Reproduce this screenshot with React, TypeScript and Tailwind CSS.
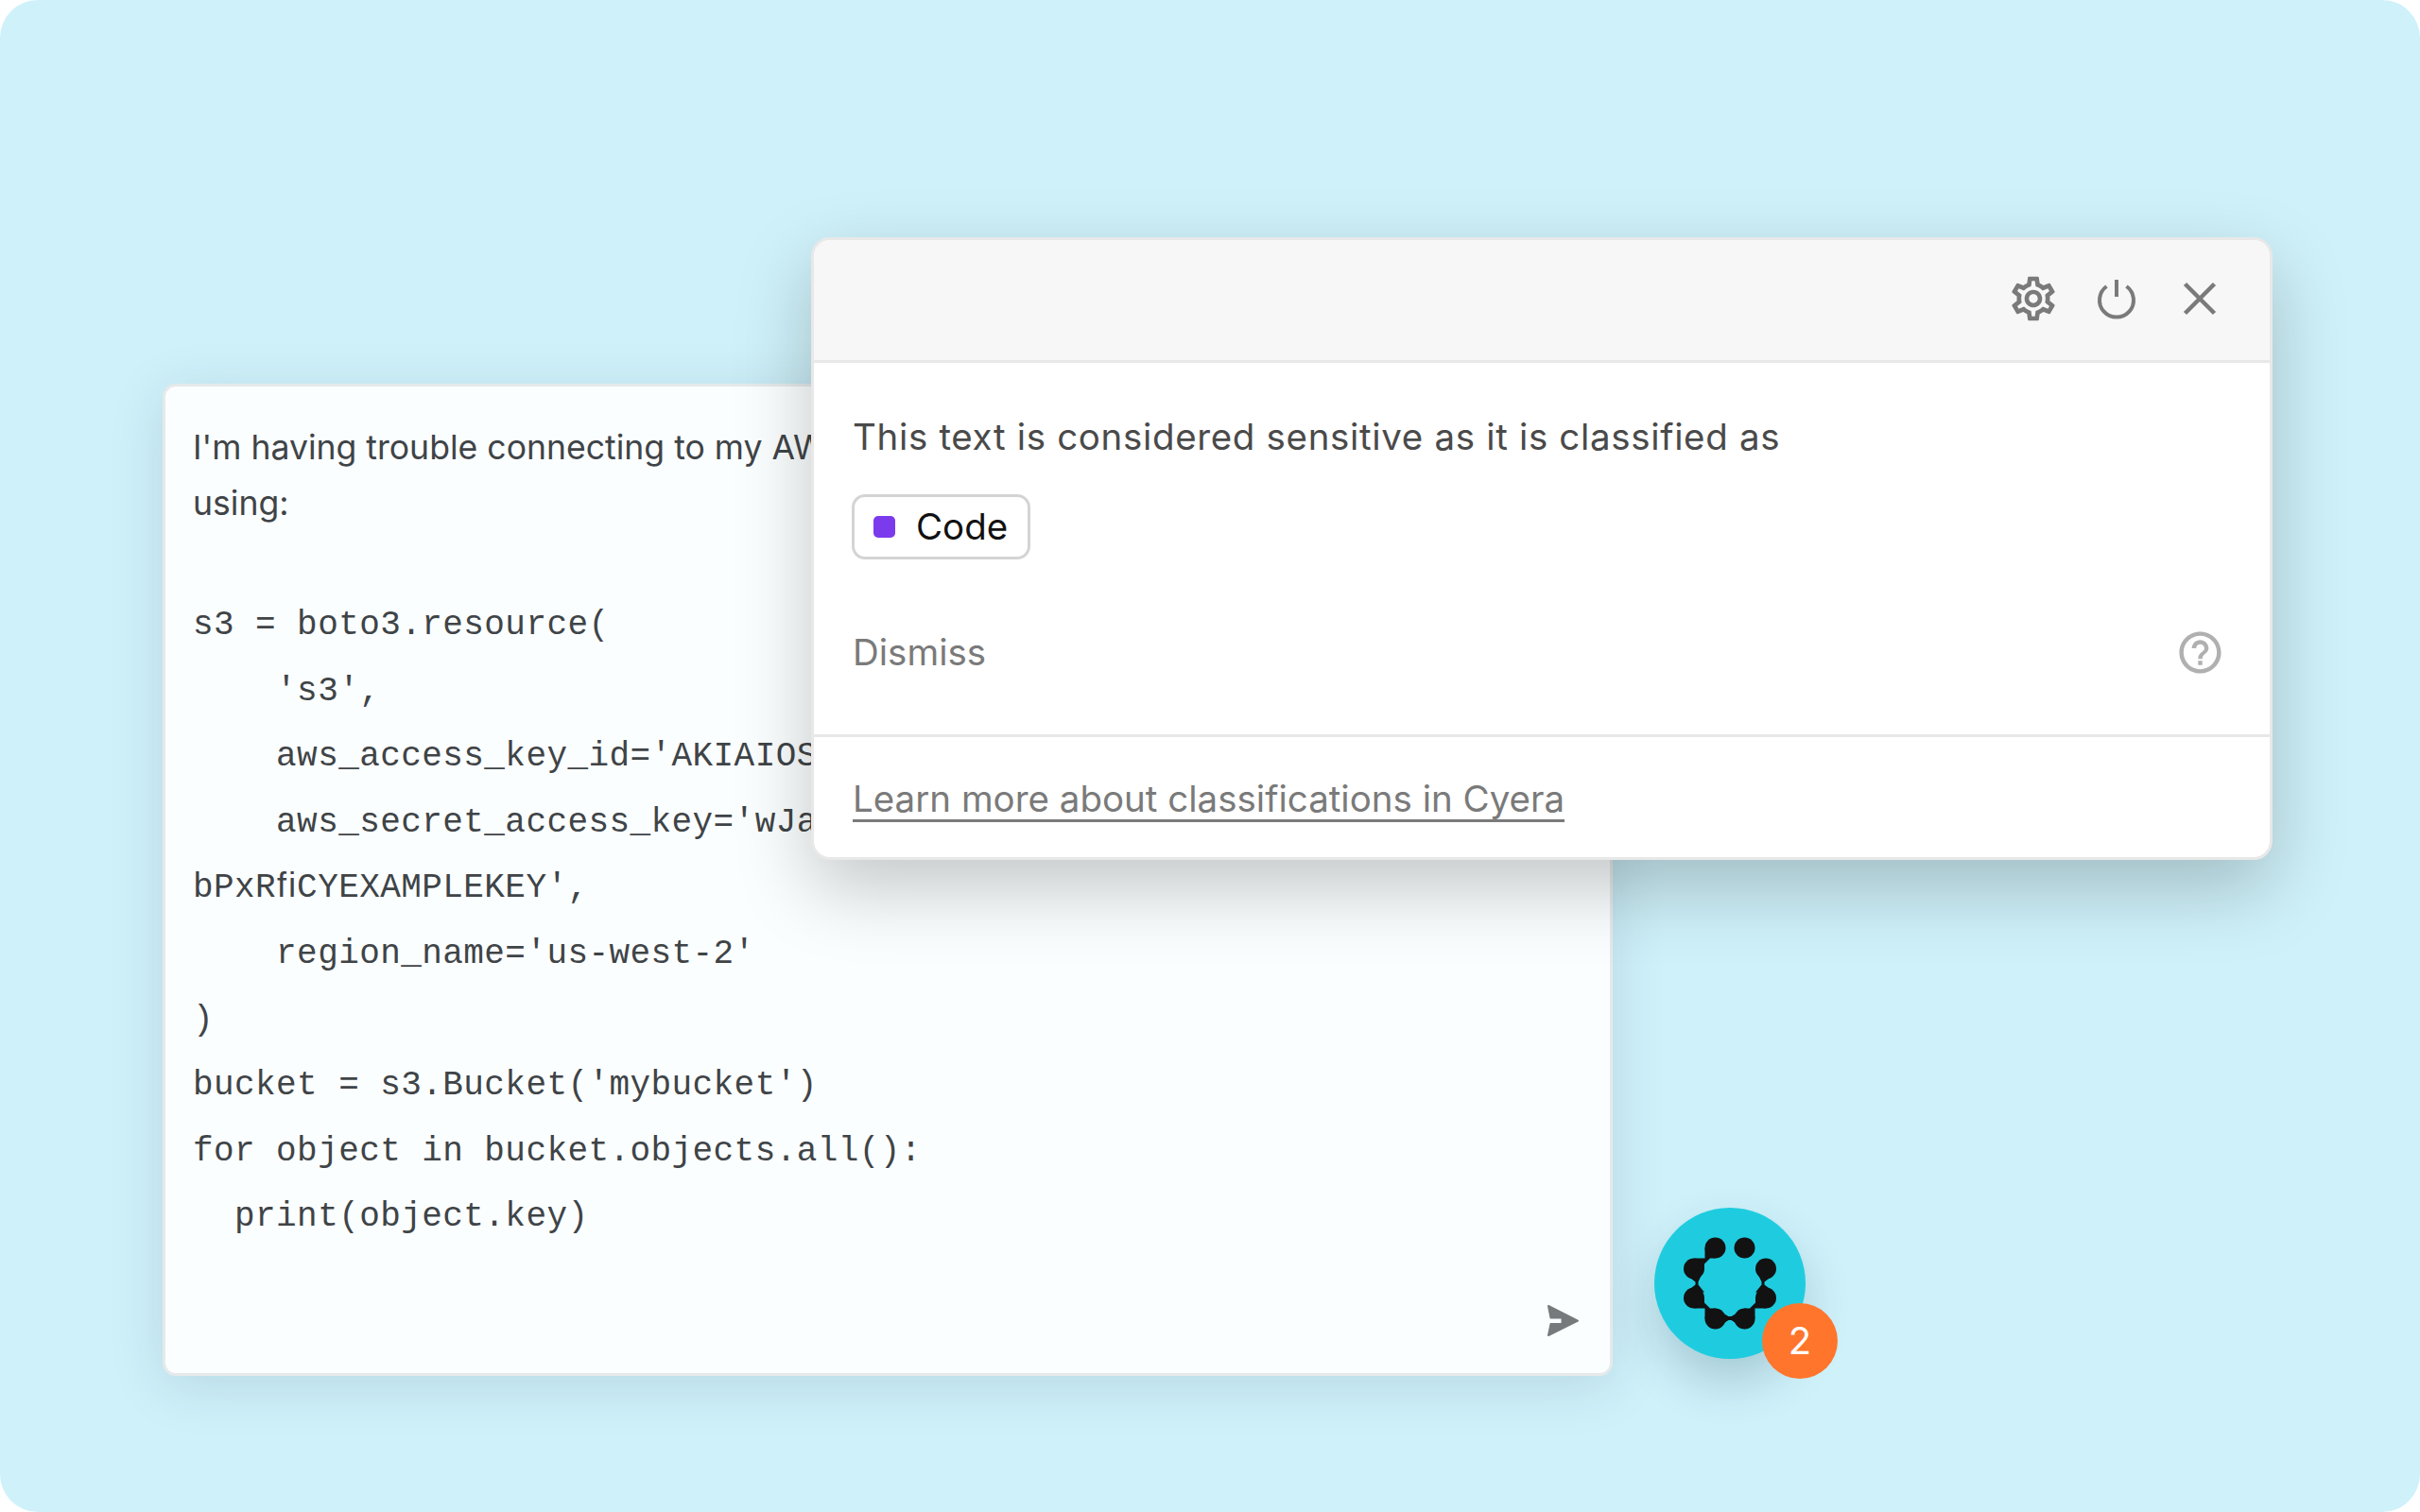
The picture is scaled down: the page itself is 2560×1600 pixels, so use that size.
import { MdOutlineSettings, MdOutlineHelpOutline } from "react-icons/md";

const codeLines = [
  "s3 = boto3.resource(",
  "    's3',",
  "    aws_access_key_id='AKIAIOSFODNN7EXAMPLE',",
  "    aws_secret_access_key='wJalrXUtnFEMI/K7MDENG/",
  "bPxR\uFB01CYEXAMPLEKEY',",
  "    region_name='us-west-2'",
  ")",
  "bucket = s3.Bucket('mybucket')",
  "for object in bucket.objects.all():",
  "  print(object.key)",
];

function Logo() {
  return (
    <svg width="120" height="120" viewBox="0 2.5 120 120" fill="#121212">
      {[
        [44.5, 25],
        [75.5, 25],
        [98, 47],
        [98, 78],
        [75.5, 100],
        [44.5, 100],
        [22, 78],
        [22, 47],
      ].map(([x, y]) => (
        <circle key={`${x}-${y}`} cx={x} cy={y} r="11" />
      ))}
      <path d="M22 36H33.5V25H44.5V36H39L33 42V47H22Z" />
      <path d="M22 89H33.5V100H44.5V89H39L33 83V78H22Z" />
      <path d="M98 89H86.5V100H75.5V89H81L87 83V78H98Z" />
      <path d="M13 53L23.5 61V64L13 72H33L26.5 64V61L33 47Z" />
      <path d="M107 53L96.5 61V64L107 72H87L93.5 64V61L87 47Z" />
      <path d="M44 89L58.5 97.5H61.5L76 89V111L61.5 101.5H58.5L44 111Z" />
    </svg>
  );
}

export default function App() {
  return (
    <div className="w-[2560px] h-[1600px] bg-white font-['Inter',sans-serif]">
      <div className="relative w-full h-full rounded-[40px] bg-[#cff1fa] pl-[172px] pt-[406px] flex items-start overflow-hidden">
        <div className="w-[1534px] h-[1050px] flex flex-col bg-[#fbfeff] border-[3px] border-[#e6e9ea] rounded-[14px] pl-[29px] pr-[29px] pt-[35px] pb-[35px] shadow-[0_10px_60px_rgba(0,40,60,0.12)]">
          <p className="text-[35.6px] leading-[59px] text-[#3f4447] whitespace-pre">
            {"I'm having trouble connecting to my AWS S3 bucket with the code I am\nusing:"}
          </p>
          <div className="mt-[65px] font-['Liberation_Mono',monospace] text-[36px] tracking-[0.42px] leading-[69.6px] text-[#3f4447] whitespace-pre">
            {codeLines.map((line) => (
              <div key={line}>{line}</div>
            ))}
          </div>
          <svg className="mt-auto self-end" width="40" height="40" viewBox="34 38 40 40" fill="#767a7d" stroke="#767a7d" strokeWidth="2" strokeLinejoin="round">
            <path d="M38 42L69 57.7L38 73L40.5 61H52.5V54.5H40.5Z" />
          </svg>
        </div>

        <div className="relative ml-[44px] mt-[872px] w-[160px] h-[160px] rounded-full bg-[#1fccdf] flex items-center justify-center shadow-[0_24px_50px_rgba(0,50,70,0.2)]">
          <Logo />
          <div className="absolute left-[114px] top-[101px] w-[80px] h-[80px] rounded-full bg-[#ff752c] flex items-center justify-center text-white text-[40px] leading-none">
            2
          </div>
        </div>

        <div className="absolute left-[858px] top-[251px] w-[1546px] h-[659px] flex flex-col bg-white border-[3px] border-[#e8e8e8] rounded-[20px] overflow-hidden shadow-[0_30px_80px_rgba(0,0,0,0.22)]">
          <div className="h-[130px] shrink-0 flex items-center justify-end gap-[40px] pr-[50px] pb-[3px] bg-[#f7f7f7] border-b-[3px] border-[#e8e8e8]">
            <div className="w-[48px] h-[48px] flex items-center justify-center text-[#7a7a7a]">
              <MdOutlineSettings size={56} className="shrink-0" />
            </div>
            <div className="w-[48px] h-[48px] flex items-center justify-center">
              <svg width="48" height="48" viewBox="0 0 48 48" fill="none" stroke="#7a7a7a" strokeWidth="4">
                <path d="M24 4V22" />
                <path d="M13.5 11A18 18 0 1 0 34.5 11" />
              </svg>
            </div>
            <div className="w-[48px] h-[48px] flex items-center justify-center">
              <svg width="48" height="48" viewBox="0 0 48 48" fill="none" stroke="#7a7a7a" strokeWidth="4.5">
                <path d="M8.5 8.5L39.5 39.5M39.5 8.5L8.5 39.5" />
              </svg>
            </div>
          </div>
          <div className="pl-[41px] pr-[41px] pt-[50px] pb-[59px] border-b-[3px] border-[#e8e8e8]">
            <p className="text-[38.5px] tracking-[0.66px] leading-[56px] text-[#4a4a4a]">
              This text is considered sensitive as it is classified as
            </p>
            <div className="mt-[33px] w-[189px] h-[69px] -ml-[1px] flex items-center gap-[22px] pl-[20px] border-[3px] border-[#d4d4d4] rounded-[14px]">
              <span className="w-[23px] h-[23px] rounded-[5px] bg-[#7c3aed]" />
              <span className="text-[38.5px] leading-none text-[#111111]">Code</span>
            </div>
            <div className="mt-[70px] h-[56px] flex items-center justify-between pr-[6px]">
              <span className="text-[38.5px] leading-[56px] text-[#7a7a7a]">Dismiss</span>
              <MdOutlineHelpOutline size={53} className="text-[#b0b0b0]" />
            </div>
          </div>
          <div className="pl-[41px] pt-[44px]">
            <span className="inline-block text-[38.5px] leading-[43px] text-[#7a7a7a] border-b-[3px] border-[#7a7a7a]">
              Learn more about classifications in Cyera
            </span>
          </div>
        </div>
      </div>
    </div>
  );
}
